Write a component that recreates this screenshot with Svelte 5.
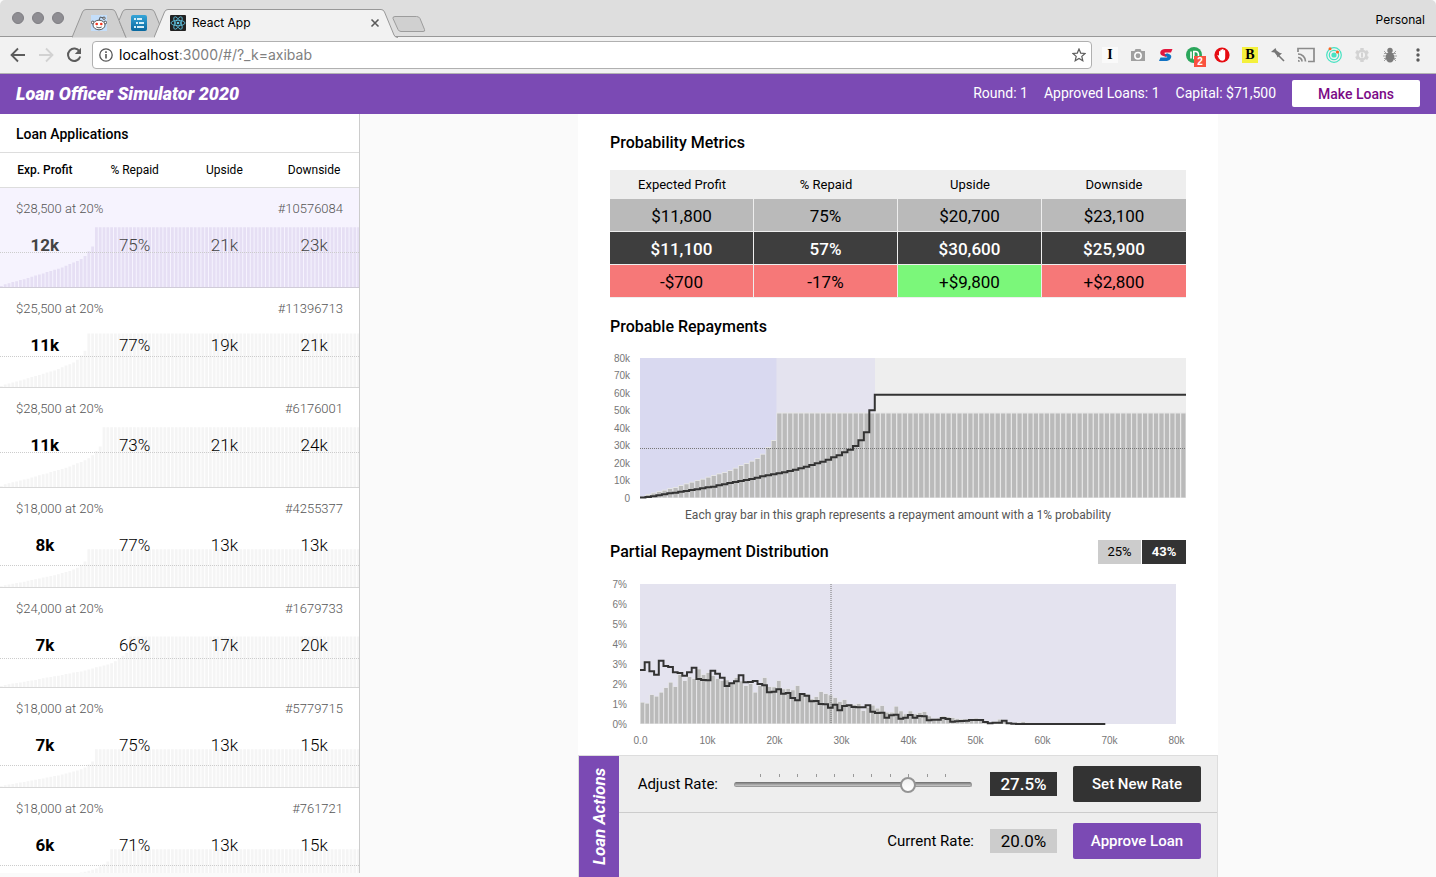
<script>
  let rate = $state(27.5);

  const loans = [
    { amount: 28500, id: '10576084', profit: '12k', repaid: 75, up: '21k', down: '23k', selected: true },
    { amount: 25500, id: '11396713', profit: '11k', repaid: 77, up: '19k', down: '21k' },
    { amount: 28500, id: '6176001', profit: '11k', repaid: 73, up: '21k', down: '24k' },
    { amount: 18000, id: '4255377', profit: '8k', repaid: 77, up: '13k', down: '13k' },
    { amount: 24000, id: '1679733', profit: '7k', repaid: 66, up: '17k', down: '20k' },
    { amount: 18000, id: '5779715', profit: '7k', repaid: 75, up: '13k', down: '15k' },
    { amount: 18000, id: '761721', profit: '6k', repaid: 71, up: '13k', down: '15k' },
  ];

  // Bar heights of the partial repayments, and of the same loan at the new rate.
  const partial = [1.5, 4, 5.5, 7, 8.3, 10, 11, 13, 14.7, 16.3, 18, 19.3, 21.3, 23, 24.7, 26, 28, 30.3, 33, 35, 37.3, 40, 44.3, 51, 58];
  const full = 85.5;
  const bars = Array.from({ length: 100 }, (_, i) => partial[i] ?? full);
  const rateSteps = [0.5, 1, 1.7, 2.7, 3.7, 4.7, 5.3, 6.3, 7, 8, 8.7, 9.7, 10.7, 11.3, 12.7, 13.7, 15, 16, 17, 18, 19, 20.3, 21.7, 22.7, 23.7, 24.7, 25.7, 27, 28.3, 29.7, 31.3, 33, 34.7, 36.3, 38.3, 40.7, 42.7, 45.7, 48.3, 52, 57.7, 65.7, 87.7, 103.3];
  const line1 = Array.from({ length: 100 }, (_, i) => rateSteps[i] ?? 103.3);

  const dist = [64, 61, 87, 82, 94, 108, 124, 111, 147, 129, 141, 135, 164, 147, 153, 144, 135, 129, 131, 124, 138, 128, 114, 120, 94, 114, 138, 111, 110, 129, 104, 105, 101, 114, 90, 88, 74, 81, 96, 90, 86, 78, 66, 72, 58, 57, 60, 39, 49, 55, 46, 54, 34, 34, 52, 38, 29, 38, 29, 33, 36, 23, 15, 16, 22, 20, 18, 15, 13, 13, 14, 16, 11, 9, 3, 6, 13, 7, 3, 2, 3, 6, 3, 2, 1, 1];
  const distLine = [162, 185, 158, 148, 190, 174, 171, 155, 153, 145, 155, 169, 135, 132, 131, 160, 151, 139, 114, 122, 128, 146, 125, 126, 129, 120, 116, 95, 97, 104, 91, 93, 78, 71, 90, 85, 68, 69, 60, 59, 49, 58, 41, 54, 56, 51, 50, 50, 56, 37, 33, 34, 19, 26, 28, 16, 19, 27, 19, 24, 23, 11, 13, 13, 18, 15, 7, 8, 9, 10, 12, 12, 12, 6, 2, 4, 4, 10, 2, 1];
  const line2 = Array.from({ length: 99 }, (_, i) => Math.max(0, (distLine[i] ?? 0) / 3));

  function stepPath(values, pitch, left, base) {
    let d = `M${left} ${base - values[0]}`;
    values.forEach((v, i) => {
      d += `V${(base - v).toFixed(1)}H${(left + (i + 1) * pitch).toFixed(2)}`;
    });
    return d;
  }

  function miniBars(loan) {
    const n = 100 - loan.repaid;
    const top = loan.amount * 0.0021;
    let d = '';
    for (let i = 0; i < 95; i++) {
      let h = top;
      if (i < n) {
        const t = (i * 24) / (n - 1);
        const a = Math.floor(t);
        const b = Math.min(24, a + 1);
        h = ((partial[a] + (partial[b] - partial[a]) * (t - a)) / full) * top;
      }
      d += `M${(i * 3.8).toFixed(1)} 62v${(-h).toFixed(1)}h2.8v${h.toFixed(1)}z`;
    }
    return d;
  }
</script>

<div class="window">
  <div class="tabs">
    <div class="lights"><i></i><i></i><i></i></div>
    <button class="tab t1" aria-label="Reddit">
      <svg class="shape" width="56" height="29" viewBox="0 0 56 29"><path d="M0 28.5L10.5 3Q11.5.5 14 .5H40Q42.500.5 43.500 3L54 28.500" fill="#cfcfcf" stroke="#989898" /></svg>
      <svg class="fav" width="16" height="16" viewBox="0 0 16 16"><rect width="16" height="16" fill="#c4defa" /><g fill="#fff" stroke="#333" stroke-width=".8"><path d="M8 5.500l1.200-3.500 3.300 1" fill="none" /><circle cx="13" cy="3.200" r="1.200" /><circle cx="1.800" cy="7.500" r="1.400" /><circle cx="14.200" cy="7.500" r="1.400" /><ellipse cx="8" cy="10" rx="6" ry="4.800" /></g><circle cx="5.700" cy="9" r="1.300" fill="#f4331e" /><circle cx="10.300" cy="9" r="1.300" fill="#f4331e" /><path d="M5.300 12q2.700 1.700 5.400 0" fill="none" stroke="#333" stroke-width=".8" /></svg>
    </button>
    <button class="tab t2" aria-label="List">
      <svg class="shape" width="46" height="29" viewBox="0 0 46 29"><path d="M7 28.500L0 11.500 3.500 3Q4.500.5 7 .5H32Q34.500.5 35.500 3L46 28.500" fill="#cfcfcf" stroke="#989898" /></svg>
      <svg class="fav" width="16" height="16" viewBox="0 0 16 16"><defs><linearGradient id="blue" x2="0" y2="1"><stop stop-color="#36a5d8" /><stop offset="1" stop-color="#08689f" /></linearGradient></defs><rect width="16" height="16" rx="2" fill="url(#blue)" /><path d="M3 4h2M6 4h5M5 8h2M8 8h5M3 12h2M6 12h7" stroke="#d5eef8" stroke-width="1.800" /></svg>
    </button>
    <div class="tab t3">
      <svg class="shape" width="244" height="29" viewBox="0 0 244 29"><path d="M0 29L10.500 3Q11.500.5 14 .5H227Q229.500.5 230.500 3L240 26Q241 28.500 244 29" fill="#f2f2f2" /><path d="M0 28.500L10.500 3Q11.500.5 14 .5H227Q229.500.5 230.500 3L240 26Q241 28.500 244 28.500" fill="none" stroke="#989898" /></svg>
      <svg class="fav" width="16" height="16" viewBox="0 0 16 16"><rect width="16" height="16" rx="1" fill="#222" /><g fill="none" stroke="#61c9e8" stroke-width=".8"><ellipse cx="8" cy="8" rx="7" ry="2.700" /><ellipse cx="8" cy="8" rx="7" ry="2.700" transform="rotate(60 8 8)" /><ellipse cx="8" cy="8" rx="7" ry="2.700" transform="rotate(120 8 8)" /></g><circle cx="8" cy="8" r="1.300" fill="#61c9e8" /></svg>
      <span class="title">React App</span>
      <button class="close" aria-label="Close tab"><svg width="10" height="10" viewBox="0 0 10 10"><path d="M1.500 1.500l7 7M8.500 1.500l-7 7" stroke="#5a5a5a" stroke-width="1.600" /></svg></button>
    </div>
    <button class="newtab" aria-label="New tab"><svg width="34" height="17" viewBox="0 0 34 17"><path d="M3 .5H24.500Q27 .5 28 2.500L32.500 13.500Q33.500 15.500 31 15.500H9Q7 15.500 6 13.500L1 2.500Q.5.5 3 .5z" fill="#d0d0d0" stroke="#9c9c9c" /></svg></button>
    <span class="profile">Personal</span>
  </div>

  <div class="toolbar">
    <div class="nav">
      <button aria-label="Back"><svg width="16" height="16" viewBox="0 0 16 16"><path d="M15 8H2M8 1.500L1.500 8 8 14.500" fill="none" stroke="#5c5c5c" stroke-width="1.800" /></svg></button>
      <button aria-label="Forward"><svg width="16" height="16" viewBox="0 0 16 16"><path d="M1 8H14M8 1.500L14.500 8 8 14.500" fill="none" stroke="#d2d2d2" stroke-width="1.800" /></svg></button>
      <button aria-label="Reload"><svg width="16" height="16" viewBox="0 0 16 16"><path d="M13.500 4.500A6.200 6.200 0 1 0 14.200 9.500" fill="none" stroke="#5c5c5c" stroke-width="2" /><path d="M15 .8V7H8.800z" fill="#5c5c5c" /></svg></button>
    </div>
    <div class="address">
      <svg width="14" height="14" viewBox="0 0 14 14"><circle cx="7" cy="7" r="6.200" fill="none" stroke="#555" stroke-width="1.300" /><path d="M7 6v4.500M7 3.300v1.600" stroke="#555" stroke-width="1.600" /></svg>
      <span class="url">localhost<em>:3000/#/?_k=axibab</em></span>
      <svg class="star" width="14" height="14" viewBox="0 0 14 14"><path d="M7 1l1.700 4.100 4.400.4-3.300 2.900 1 4.300L7 10.400 3.200 12.700l1-4.300L.9 5.500l4.400-.4z" fill="none" stroke="#5c5c5c" stroke-width="1.200" /></svg>
    </div>
    <div class="exts">
      <button aria-label="Instapaper"><span class="glyph pale">I</span></button>
      <button aria-label="Screenshot"><svg width="16" height="16" viewBox="0 0 16 16"><path d="M1 4h3.500l1-2h5l1 2H15v10H1z" fill="#a0a0a0" /><circle cx="8" cy="8.700" r="3.200" fill="none" stroke="#fff" stroke-width="1.500" /></svg></button>
      <button aria-label="Stylish"><svg width="16" height="16" viewBox="0 0 16 16"><path d="M14.500 2L13 5.500H7.500Q6 5.500 6.500 6.500L10 8.500 8 10 4 8.500Q1.500 7 2.500 4.500T7 2z" fill="#e3173e" /><path d="M1 14l1.500-3.500H8.500Q9.800 10.400 9 9.500L6.500 8 9 6.300l2.500 1Q14 8.500 13 11T9 14z" fill="#1273c4" /></svg></button>
      <button aria-label="Pushbullet" class="push"><svg width="20" height="20" viewBox="0 0 20 20"><circle cx="8" cy="8" r="8" fill="#2ba65b" /><path d="M5 4.500v7M7.800 4.500h1.700a3 3.500 0 0 1 0 7H7.800z" stroke="#fff" stroke-width="1.600" fill="none" /><rect x="8" y="9" width="12" height="11" fill="#f9523f" /><text x="14" y="18" text-anchor="middle" font-size="10" fill="#fff">2</text></svg></button>
      <button aria-label="Ad blocker"><svg width="16" height="16" viewBox="0 0 16 16"><circle cx="8" cy="8" r="7.600" fill="#e60d12" /><path d="M5 9V4.800q0-.8.7-.8t.7.800V3.300q0-.8.8-.8t.8.800v-.6q0-.8.8-.8t.8.800v1q.1-.8.8-.8t.8.800V10q0 3.800-3 3.800-2 0-3.400-2.600L3.300 8.300q1-.8 1.700.7z" fill="#fff" /></svg></button>
      <button aria-label="Bookmarks"><span class="glyph yellow">B</span></button>
      <button aria-label="Pin"><svg width="16" height="16" viewBox="0 0 16 16"><path d="M1 5L5.500 1l1 2.500L10 6l2 .2L7.500 10.500 6.800 8.500 4.500 5.500z" fill="#777" /><path d="M8 8l6 6" stroke="#777" stroke-width="1.600" /></svg></button>
      <button aria-label="Cast"><svg width="18" height="16" viewBox="0 0 18 16"><path d="M1 5V1.500H17V14.500H11M1 7a7.500 7.500 0 0 1 7.500 7.500M1 10.500a4 4 0 0 1 4 4" fill="none" stroke="#8b8b8b" stroke-width="1.700" /><path d="M1 12.700a2 2 0 0 1 2 2H1z" fill="#8b8b8b" /></svg></button>
      <button aria-label="Orbit"><svg width="16" height="16" viewBox="0 0 16 16"><g fill="none" stroke="#47e2c2"><circle cx="8" cy="8" r="7.300" stroke-width="1.200" /><circle cx="8" cy="8" r="4.700" stroke-width="1.200" /></g><circle cx="8" cy="8" r="2.600" fill="#47e2c2" /><circle cx="4" cy="1.800" r="1.500" fill="#ff6422" /><circle cx="11.500" cy="5" r="1.600" fill="#ff6422" /></svg></button>
      <button aria-label="Settings extension"><svg width="16" height="16" viewBox="0 0 16 16"><g stroke="#d3d3d3" stroke-width="3.400"><path d="M8 1v14M2 4.500l12 7M14 4.500l-12 7" /></g><circle cx="8" cy="8" r="4.300" fill="#f2f2f2" stroke="#d3d3d3" stroke-width="2.400" /><path d="M8 5.500v5" stroke="#d3d3d3" stroke-width="2" /></svg></button>
      <button aria-label="Debug"><svg width="16" height="16" viewBox="0 0 16 16"><path d="M2 4l3 3M14 4l-3 3M1 9h14M2 14l3-3M14 14l-3-3M2 6.500h12M2 11.500h12" stroke="#999" stroke-width=".9" /><circle cx="8" cy="3.500" r="2.700" fill="#7c7c7c" /><ellipse cx="8" cy="10.300" rx="4.300" ry="5.300" fill="#7c7c7c" /></svg></button>
      <button aria-label="Menu"><svg width="4" height="16" viewBox="0 0 4 16"><g fill="#5a5a5a"><circle cx="2" cy="3" r="1.700" /><circle cx="2" cy="8" r="1.700" /><circle cx="2" cy="13" r="1.700" /></g></svg></button>
    </div>
  </div>

  <header>
    <h1>Loan Officer Simulator 2020</h1>
    <span>Round: 1</span>
    <span>Approved Loans: 1</span>
    <span>Capital: $71,500</span>
    <a href="#/loans">Make Loans</a>
  </header>

  <div class="body">
    <aside>
      <h2>Loan Applications</h2>
      <div class="cols heads"><b>Exp. Profit</b><span>% Repaid</span><span>Upside</span><span>Downside</span></div>
      {#each loans as loan (loan.id)}
        <div class="loan" class:selected={loan.selected}>
          <svg class="mini" width="359" height="62" aria-hidden="true">
            <path d={miniBars(loan)} />
            <line x1="0" x2="359" y1={62.5 - Math.round(loan.amount * 0.00122)} y2={62.5 - Math.round(loan.amount * 0.00122)} />
          </svg>
          <div class="meta"><span>${loan.amount.toLocaleString('en-US')} at 20%</span><span>#{loan.id}</span></div>
          <div class="cols nums"><b>{loan.profit}</b><span>{loan.repaid}%</span><span>{loan.up}</span><span>{loan.down}</span></div>
        </div>
      {/each}
    </aside>

    <main>
      <div class="detail">
        <h3>Probability Metrics</h3>
        <table>
          <thead><tr><th>Expected Profit</th><th>% Repaid</th><th>Upside</th><th>Downside</th></tr></thead>
          <tbody>
            <tr class="old"><td>$11,800</td><td>75%</td><td>$20,700</td><td>$23,100</td></tr>
            <tr class="new"><td>$11,100</td><td>57%</td><td>$30,600</td><td>$25,900</td></tr>
            <tr class="diff"><td>-$700</td><td>-17%</td><td class="good">+$9,800</td><td>+$2,800</td></tr>
          </tbody>
        </table>

        <h3>Probable Repayments</h3>
        <svg class="chart" viewBox="0 0 576 152">
          <rect x="30" y="6" width="546" height="140" fill="#eee" />
          <rect x="30" y="6" width="235" height="140" fill="#e4e3ef" />
          <rect x="30" y="6" width="136.500" height="140" fill="#d9d9f0" />
          {#each bars as h, i}
            <rect x={30 + i * 5.46} y={146 - h} width="5.460" height={h} fill="#e6e6e6" />
            <rect x={30.7 + i * 5.46} y={147 - h} width="4.200" height={Math.max(0, h - 1.500)} fill="#bababa" />
          {/each}
          <line x1="30" x2="576" y1="96.500" y2="96.500" class="dots" />
          <path d={stepPath(line1, 5.46, 30, 146)} class="step" />
          {#each [0, 1, 2, 3, 4, 5, 6, 7, 8] as k}
            <text x="20" y={149.5 - k * 17.5} text-anchor="end">{k ? `${k}0k` : '0'}</text>
          {/each}
        </svg>
        <p class="note">Each gray bar in this graph represents a repayment amount with a 1% probability</p>

        <div class="row">
          <h3>Partial Repayment Distribution</h3>
          <div class="badges"><span>25%</span><b>43%</b></div>
        </div>
        <svg class="chart" viewBox="0 0 576 170">
          <rect x="30" y="6" width="536" height="140" fill="#e4e3ef" />
          {#each dist as h, i}
            <rect x={30 + i * 4.7} y={145.5 - h / 3} width="4.700" height={h / 3 + 0.5} fill="#e6e6e6" />
            <rect x={30.7 + i * 4.7} y={146 - h / 3} width="3.600" height={Math.max(0, h / 3 - 0.5)} fill="#bababa" />
          {/each}
          <line x1="221" x2="221" y1="6" y2="146" class="dots" />
          <path d={stepPath(line2, 4.7, 30, 146)} class="step" />
          {#each [0, 1, 2, 3, 4, 5, 6, 7] as k}
            <text x="17" y={149.5 - k * 20} text-anchor="end">{k}%</text>
          {/each}
          {#each [0, 1, 2, 3, 4, 5, 6, 7, 8] as k}
            <text x={30.5 + k * 67} y="166" text-anchor="middle">{k ? `${k}0k` : '0.0'}</text>
          {/each}
        </svg>
      </div>

      <section class="actions">
        <h4>Loan Actions</h4>
        <div class="action">
          <label for="rate">Adjust Rate:</label>
          <div class="slider">
            <div class="ticks">{#each Array(11) as _}<i></i>{/each}</div>
            <input id="rate" type="range" min="5" max="35" step="2.5" bind:value={rate} />
          </div>
          <output class="dark" for="rate">{rate.toFixed(1)}%</output>
          <button class="dark">Set New Rate</button>
        </div>
        <div class="action">
          <span>Current Rate:</span>
          <output>20.0%</output>
          <button>Approve Loan</button>
        </div>
      </section>
    </main>
  </div>
</div>

<style>
  :global(body) { margin: 0; background: #fff; }
  .window { height: 100vh; display: flex; flex-direction: column; overflow: hidden; background: #fafafa; font: 16px/20px Roboto, sans-serif; color: #000; }
  .window * { box-sizing: border-box; }
  button { border: 0; padding: 0; background: none; font: inherit; }
  svg { display: block; flex: none; }
  h1, h2, h3, h4, p { margin: 0; }

  .tabs { flex: none; height: 37px; display: flex; align-items: flex-end; background: #dedede; border-bottom: 1px solid #989898; border-radius: 5px 5px 0 0; }
  .lights { align-self: center; display: flex; gap: 8px; padding: 0 8px 0 12px; }
  .lights i { width: 12px; height: 12px; border-radius: 50%; background: #8e8d92; border: 1px solid #7f7e83; }
  .tab { position: relative; height: 28px; display: flex; align-items: center; margin-bottom: -1px; }
  .shape { position: absolute; left: 0; top: 0; }
  .fav { position: relative; }
  .t1 { width: 47px; padding-left: 19px; }
  .t2 { width: 35px; padding-left: 12px; }
  .t3 { width: 238px; padding-left: 16px; }
  .title { position: relative; margin-left: 6px; font: 12px/16px Inter, sans-serif; }
  .close { position: relative; margin-left: auto; margin-right: 12px; }
  .newtab { padding-bottom: 3px; }
  .profile { margin: 0 11px 8px auto; font: 12px/16px Inter, sans-serif; }

  .toolbar { flex: none; height: 37px; display: flex; align-items: center; background: #f2f2f2; border-bottom: 1px solid #b3b3b3; }
  .nav { display: flex; gap: 12px; padding: 0 10px; }
  .address { flex: 1; height: 28px; display: flex; align-items: center; background: #fff; border: 1px solid #b0b0b0; border-radius: 4px; padding: 0 5px 0 6px; }
  .url { flex: 1; margin-left: 6px; font: 14px/18px Inter, sans-serif; }
  .url em { font-style: normal; color: #808080; }
  .exts { display: flex; padding: 0 4px; }
  .exts button { width: 28px; height: 20px; display: flex; align-items: center; justify-content: center; }
  .exts .push { padding: 4px 0 0 4px; }
  .exts text { font-family: "Liberation Sans", sans-serif; font-weight: bold; }
  .glyph { width: 16px; font: bold 14px/16px "Liberation Serif", serif; }
  .pale { background: #fafafa; }
  .yellow { background: #f4f03c; }

  header { flex: none; height: 40px; display: flex; align-items: center; gap: 16px; padding: 0 16px 2px; background: #7b4ab4; color: #fff; font-size: 14px; }
  h1 { margin-right: auto; padding-top: 2px; font-size: 18px; line-height: 20px; font-weight: 900; font-style: italic; }
  header a { width: 128px; padding: 4px 0 3px; background: #fff; border-radius: 2px; color: #7b0a86; text-align: center; text-decoration: none; font-weight: 500; }

  .body { flex: 1; min-height: 0; display: flex; }
  aside { flex: none; width: 360px; margin-bottom: 4px; background: #fff; border-right: 1px solid #ccc; overflow: hidden; }
  h2 { padding: 10px 16px 8px; border-bottom: 1px solid #ddd; font-size: 14px; line-height: 20px; font-weight: 500; }
  .cols { display: grid; grid-template-columns: repeat(4, 1fr); text-align: center; }
  .heads { height: 35px; line-height: 34px; font-size: 12px; border-bottom: 1px solid #ddd; }
  .cols b { font-weight: 500; }
  .loan { position: relative; height: 100px; padding-top: 11px; border-bottom: 1px solid #d8d8d8; }
  .meta { position: relative; display: flex; justify-content: space-between; padding: 0 16px; font-size: 13px; line-height: 20px; font-weight: 300; color: #555; }
  .nums { position: relative; margin-top: 16px; font-size: 17px; line-height: 20px; font-weight: 300; color: #000; }
  .nums b { font-weight: 700; }
  .mini { position: absolute; left: 0; bottom: 0; width: 100%; }
  .mini path { fill: #f5f5f5; }
  .mini line { stroke: #ccc; stroke-dasharray: 1 1; }
  .selected { background: #f6f3fe; border-color: #d0ccd8; }
  .selected .mini path { fill: #e6dff4; }
  .selected .nums { color: #444; }

  main { width: 640px; margin: 0 auto; display: flex; flex-direction: column; background: #fff; }
  .detail { flex: 1; min-height: 0; padding: 18px 32px 0; overflow: hidden; }
  h3 { font-size: 16px; line-height: 22px; font-weight: 500; }
  table { width: 100%; table-layout: fixed; margin: 16px 0 18px; border-collapse: separate; border-spacing: 0; background: #eee; text-align: center; }
  th { height: 29px; padding: 1px 0 0; font-size: 13px; font-weight: 400; }
  td { height: 33px; padding: 1px 0 0; border-right: 1px solid #eee; border-bottom: 1px solid #eee; font-size: 17px; }
  td:last-child { border-right: 0; }
  .old td { background: #bababa; }
  .new td { background: #3e3e3e; color: #fff; font-weight: 500; }
  .diff td { background: #f67878; }
  .diff .good { background: #7bf77a; }
  .chart { width: 100%; height: auto; margin-top: 14px; }
  .chart text { font: 10px "Liberation Sans", sans-serif; fill: #777; }
  .dots { stroke: #777; stroke-dasharray: 1 1; }
  .step { fill: none; stroke: #333; stroke-width: 2; }
  .note { margin-top: 1px; font-size: 12px; line-height: 20px; text-align: center; color: #555; }
  .row { display: flex; justify-content: space-between; align-items: center; margin-top: 15px; }
  .badges { display: flex; gap: 1px; font-size: 13px; line-height: 24px; text-align: center; }
  .badges span { width: 43px; background: #ccc; }
  .badges b { width: 44px; background: #333; color: #fff; font-weight: 700; }

  .actions { flex: none; display: grid; grid-template: 56px 65px / 40px 1fr; background: #eee; border: 1px solid #ddd; border-bottom: 0; }
  h4 { grid-row: 1 / 3; writing-mode: vertical-rl; transform: rotate(180deg); background: #7b4ab4; color: #fff; text-align: center; font-size: 17px; line-height: 40px; font-weight: 700; font-style: italic; }
  .action { display: flex; align-items: center; justify-content: flex-end; gap: 16px; padding: 0 16px; font-size: 15px; }
  .action + .action { border-top: 1px solid #ccc; padding-bottom: 8px; }
  .slider { flex: 1; max-width: 240px; padding-right: 2px; position: relative; height: 20px; display: flex; align-items: center; }
  .ticks { position: absolute; left: 26px; right: 28px; top: 0; display: flex; justify-content: space-between; }
  .ticks i { width: 1px; height: 3px; background: #999; }
  input { appearance: none; position: relative; width: 100%; height: 20px; margin: 0; background: none; }
  input::-webkit-slider-runnable-track { height: 5px; border-radius: 3px; background: linear-gradient(#858585, #c8c8c8); border: 1px solid #999; border-top-color: #777; }
  input::-webkit-slider-thumb { appearance: none; width: 16px; height: 16px; margin-top: -6px; border-radius: 50%; border: 2px solid #949494; background: linear-gradient(#f0f0f0, #fff); }
  output { width: 67px; line-height: 24px; background: #ccc; text-align: center; font-size: 17px; }
  output.dark { background: #333; color: #fff; font-weight: 500; }
  .action button { width: 128px; height: 36px; border-radius: 2px; background: #7b4ab4; color: #fff; font-weight: 500; }
  .action button.dark { background: #333; }
</style>
